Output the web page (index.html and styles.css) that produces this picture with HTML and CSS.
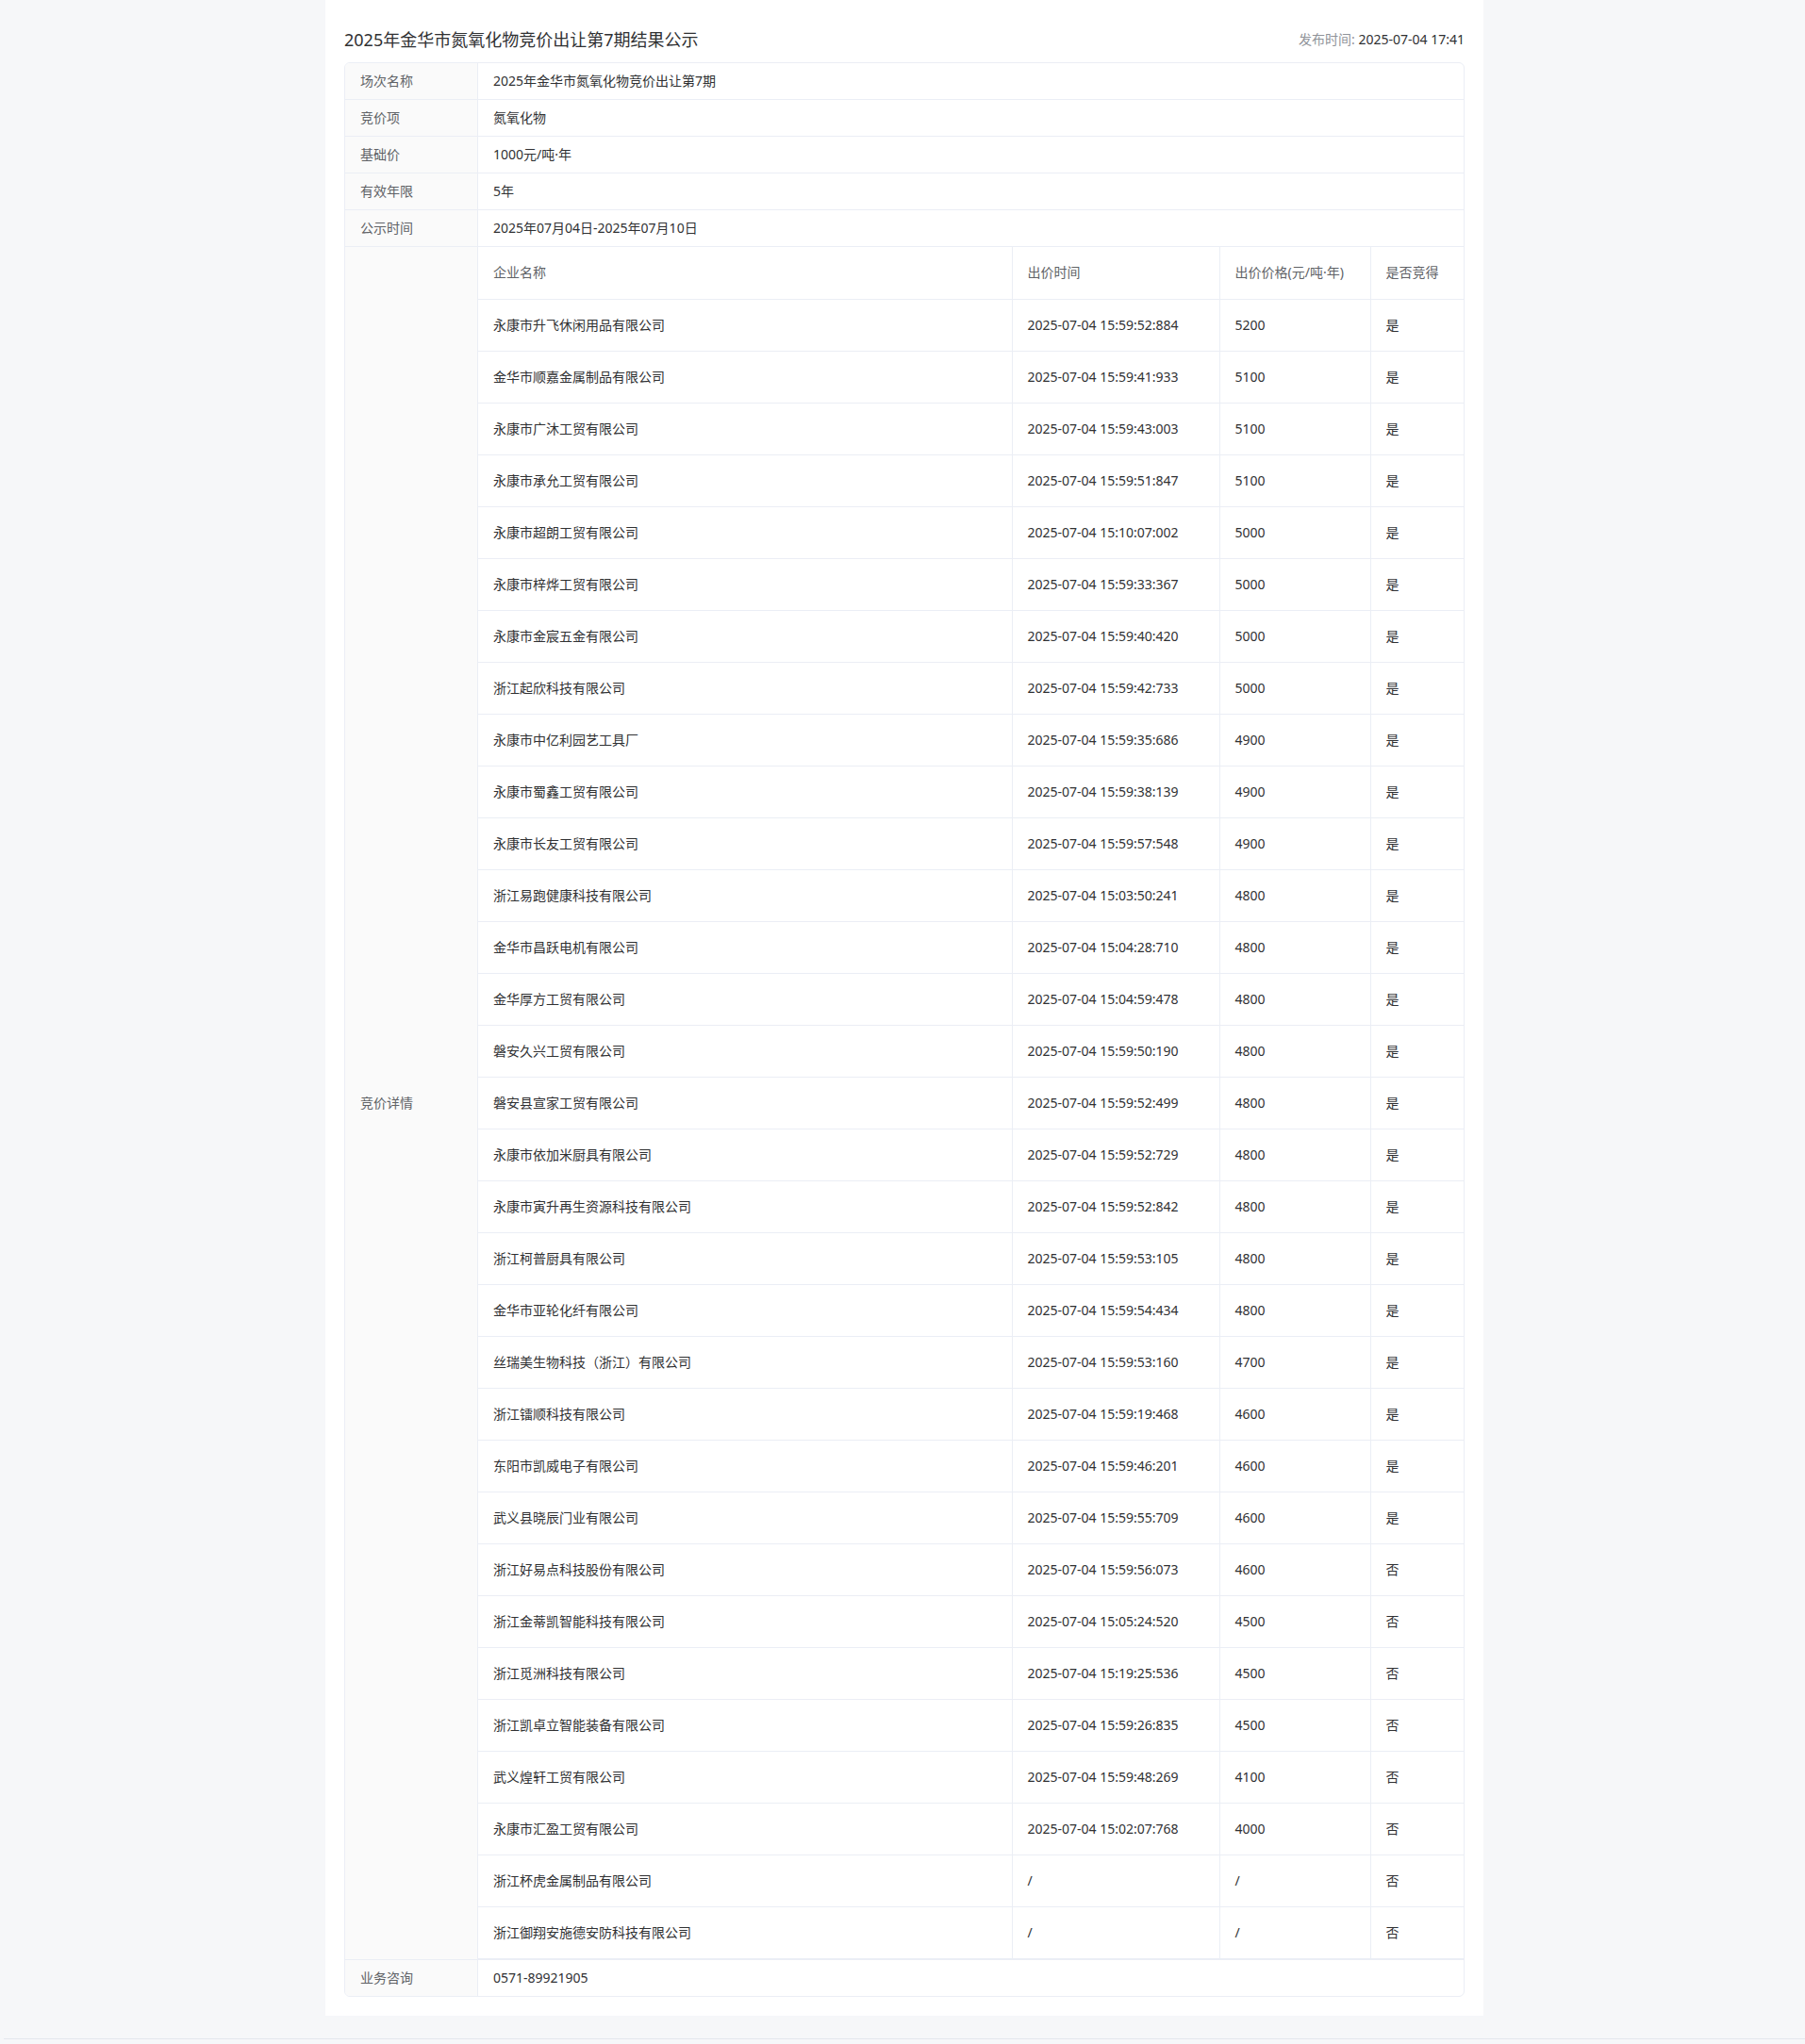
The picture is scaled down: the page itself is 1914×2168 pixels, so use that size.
FILE: index.html
```html
<!DOCTYPE html>
<html lang="zh-CN">
<head>
<meta charset="utf-8">
<title>2025年金华市氮氧化物竞价出让第7期结果公示</title>
<link rel="stylesheet" href="styles.css">
</head>
<body>
<div class="page">
  <div class="card">
    <div class="head">
      <h1 class="title">2025年金华市氮氧化物竞价出让第7期结果公示</h1>
      <div class="pub"><span class="pub-label">发布时间:</span> 2025-07-04 17:41</div>
    </div>
    <div class="desc">
      <div class="row"><div class="label">场次名称</div><div class="value">2025年金华市氮氧化物竞价出让第7期</div></div>
      <div class="row"><div class="label">竞价项</div><div class="value">氮氧化物</div></div>
      <div class="row"><div class="label">基础价</div><div class="value">1000元/吨·年</div></div>
      <div class="row"><div class="label">有效年限</div><div class="value">5年</div></div>
      <div class="row"><div class="label">公示时间</div><div class="value">2025年07月04日-2025年07月10日</div></div>
      <div class="row"><div class="label">竞价详情</div>
        <div class="value value-table">
          <table class="bids">
            <colgroup><col class="c-name"><col class="c-time"><col class="c-price"><col class="c-res"></colgroup>
            <thead>
              <tr><th>企业名称</th><th>出价时间</th><th>出价价格(元/吨·年)</th><th>是否竞得</th></tr>
            </thead>
            <tbody>
              <tr><td>永康市升飞休闲用品有限公司</td><td>2025-07-04 15:59:52:884</td><td>5200</td><td>是</td></tr>
              <tr><td>金华市顺嘉金属制品有限公司</td><td>2025-07-04 15:59:41:933</td><td>5100</td><td>是</td></tr>
              <tr><td>永康市广沐工贸有限公司</td><td>2025-07-04 15:59:43:003</td><td>5100</td><td>是</td></tr>
              <tr><td>永康市承允工贸有限公司</td><td>2025-07-04 15:59:51:847</td><td>5100</td><td>是</td></tr>
              <tr><td>永康市超朗工贸有限公司</td><td>2025-07-04 15:10:07:002</td><td>5000</td><td>是</td></tr>
              <tr><td>永康市梓烨工贸有限公司</td><td>2025-07-04 15:59:33:367</td><td>5000</td><td>是</td></tr>
              <tr><td>永康市金宸五金有限公司</td><td>2025-07-04 15:59:40:420</td><td>5000</td><td>是</td></tr>
              <tr><td>浙江起欣科技有限公司</td><td>2025-07-04 15:59:42:733</td><td>5000</td><td>是</td></tr>
              <tr><td>永康市中亿利园艺工具厂</td><td>2025-07-04 15:59:35:686</td><td>4900</td><td>是</td></tr>
              <tr><td>永康市蜀鑫工贸有限公司</td><td>2025-07-04 15:59:38:139</td><td>4900</td><td>是</td></tr>
              <tr><td>永康市长友工贸有限公司</td><td>2025-07-04 15:59:57:548</td><td>4900</td><td>是</td></tr>
              <tr><td>浙江易跑健康科技有限公司</td><td>2025-07-04 15:03:50:241</td><td>4800</td><td>是</td></tr>
              <tr><td>金华市昌跃电机有限公司</td><td>2025-07-04 15:04:28:710</td><td>4800</td><td>是</td></tr>
              <tr><td>金华厚方工贸有限公司</td><td>2025-07-04 15:04:59:478</td><td>4800</td><td>是</td></tr>
              <tr><td>磐安久兴工贸有限公司</td><td>2025-07-04 15:59:50:190</td><td>4800</td><td>是</td></tr>
              <tr><td>磐安县宣家工贸有限公司</td><td>2025-07-04 15:59:52:499</td><td>4800</td><td>是</td></tr>
              <tr><td>永康市依加米厨具有限公司</td><td>2025-07-04 15:59:52:729</td><td>4800</td><td>是</td></tr>
              <tr><td>永康市寅升再生资源科技有限公司</td><td>2025-07-04 15:59:52:842</td><td>4800</td><td>是</td></tr>
              <tr><td>浙江柯普厨具有限公司</td><td>2025-07-04 15:59:53:105</td><td>4800</td><td>是</td></tr>
              <tr><td>金华市亚轮化纤有限公司</td><td>2025-07-04 15:59:54:434</td><td>4800</td><td>是</td></tr>
              <tr><td>丝瑞美生物科技（浙江）有限公司</td><td>2025-07-04 15:59:53:160</td><td>4700</td><td>是</td></tr>
              <tr><td>浙江镭顺科技有限公司</td><td>2025-07-04 15:59:19:468</td><td>4600</td><td>是</td></tr>
              <tr><td>东阳市凯威电子有限公司</td><td>2025-07-04 15:59:46:201</td><td>4600</td><td>是</td></tr>
              <tr><td>武义县晓辰门业有限公司</td><td>2025-07-04 15:59:55:709</td><td>4600</td><td>是</td></tr>
              <tr><td>浙江好易点科技股份有限公司</td><td>2025-07-04 15:59:56:073</td><td>4600</td><td>否</td></tr>
              <tr><td>浙江金蒂凯智能科技有限公司</td><td>2025-07-04 15:05:24:520</td><td>4500</td><td>否</td></tr>
              <tr><td>浙江觅洲科技有限公司</td><td>2025-07-04 15:19:25:536</td><td>4500</td><td>否</td></tr>
              <tr><td>浙江凯卓立智能装备有限公司</td><td>2025-07-04 15:59:26:835</td><td>4500</td><td>否</td></tr>
              <tr><td>武义煌轩工贸有限公司</td><td>2025-07-04 15:59:48:269</td><td>4100</td><td>否</td></tr>
              <tr><td>永康市汇盈工贸有限公司</td><td>2025-07-04 15:02:07:768</td><td>4000</td><td>否</td></tr>
              <tr><td>浙江杯虎金属制品有限公司</td><td>/</td><td>/</td><td>否</td></tr>
              <tr><td>浙江御翔安施德安防科技有限公司</td><td>/</td><td>/</td><td>否</td></tr>
            </tbody>
          </table>
        </div>
      </div>
      <div class="row"><div class="label">业务咨询</div><div class="value">0571-89921905</div></div>
    </div>
  </div>
  <div class="footer"></div>
</div>
</body>
</html>
```

FILE: styles.css
```css
* { box-sizing: border-box; }
html, body { margin: 0; padding: 0; }
body {
  background: #f6f7f9;
  font-family: "Noto Sans", "Noto Sans CJK SC", sans-serif;
  font-size: 14px;
  color: #303133;
}
.page { padding-left: 4px; }
.card {
  width: 1228px;
  margin: 0 auto;
  background: #ffffff;
  padding: 0 20px 20px 20px;
}
.head {
  display: flex;
  justify-content: space-between;
  align-items: center;
  height: 66px;
  padding-top: 27px;
  padding-bottom: 9px;
}
.title {
  margin: 0;
  font-size: 18px;
  font-weight: normal;
  line-height: 30px;
  color: #303133;
}
.pub { font-size: 14px; color: #303133; line-height: 30px; }
.pub-label { color: #909399; }
.desc {
  border: 1px solid #ebeef5;
  border-radius: 6px;
  overflow: hidden;
}
.row {
  display: flex;
  border-top: 1px solid #ebeef5;
}
.row:first-child { border-top: none; }
.label {
  width: 141px;
  flex: none;
  background: #fafafa;
  border-right: 1px solid #ebeef5;
  padding: 0 16px;
  display: flex;
  align-items: center;
  color: #606266;
  min-height: 38px;
  line-height: 20px;
}
.value {
  flex: 1;
  padding: 9px 16px;
  line-height: 20px;
  color: #303133;
}
.value-table { padding: 0; }
.bids {
  width: 100%;
  border-collapse: collapse;
  table-layout: fixed;
  border-right: 1px solid #ebeef5;
  border-bottom: 1px solid #ebeef5;
}
.c-name { width: 566px; }
.c-time { width: 220px; }
.c-price { width: 160px; }
.c-res { width: 100px; }
.bids th, .bids td {
  height: 55px;
  padding: 0 16px;
  text-align: left;
  font-weight: normal;
  line-height: 20px;
  border-bottom: 1px solid #ebeef5;
  border-left: 1px solid #ebeef5;
}
.bids th:first-child, .bids td:first-child { border-left: none; }
.bids th { color: #606266; }
.bids td { color: #303133; }
.footer {
  height: 30px;
  margin-top: 24px;
  border-top: 1px solid #e4e7ed;
  background: #f6f7f9;
}
```
